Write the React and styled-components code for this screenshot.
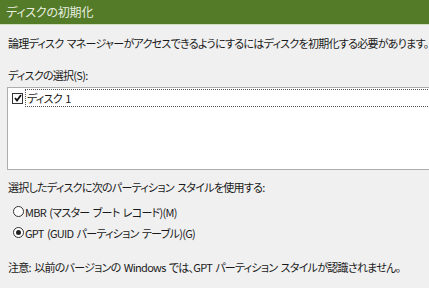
import React from 'react';
import styled, { createGlobalStyle } from 'styled-components';

const GlobalStyle = createGlobalStyle`
	html, body {
		margin: 0;
		padding: 0;
		background: #f0f0f0;
		overflow: hidden;
	}
	body {
		font-family: 'Noto Sans CJK JP', 'Noto Sans', sans-serif;
		font-feature-settings: 'palt';
		font-size: 11px;
		letter-spacing: -0.72px;
		word-spacing: 1.5px;
		color: #1a1a1a;
	}
`;

const Dialog = styled.div`
	width: 429px;
	height: 288px;
	overflow: hidden;
	background: #f0f0f0;
	display: flex;
	flex-direction: column;
`;

const TitleBar = styled.div`
	height: 24px;
	line-height: 24px;
	padding-left: 6px;
	background: #547b27;
	color: #e8eee0;
	font-size: 12px;
	letter-spacing: -0.2px;
	border-bottom: 1px solid #cfdcc0;
`;

const Body = styled.div`
	padding: 0 0 0 8px;
	display: flex;
	flex-direction: column;
`;

const Text = styled.div`
	line-height: 18px;
	white-space: nowrap;
	margin-top: ${(p) => p.top || 0}px;
`;

const ListBox = styled.div`
	margin: 3px 0 0 -1px;
	width: 460px;
	height: 80px;
	background: #fff;
	border: 1px solid #adadad;
	padding: 1px 0 0 4px;
`;

const ListItem = styled.div`
	display: flex;
	align-items: center;
	height: 18px;
	gap: 2px;
`;

const Check = styled.span`
	width: 9px;
	height: 9px;
	border: 1px solid #333;
	background: #fff;
	display: flex;
	align-items: center;
	justify-content: center;
`;

const ItemLabel = styled.span`
	flex: 1;
	height: 16px;
	line-height: 16px;
	padding-left: 1px;
	border: 1px dotted #555;
`;

const RadioRow = styled.label`
	display: flex;
	align-items: center;
	gap: 1px;
	height: 21px;
	padding-left: 5px;
	white-space: nowrap;
`;

const Radio = styled.span`
	width: 9px;
	height: 9px;
	border-radius: 50%;
	border: 1px solid #333;
	background: #fff;
	display: flex;
	align-items: center;
	justify-content: center;
	&::after {
		content: '';
		width: 5px;
		height: 5px;
		border-radius: 50%;
		background: ${(p) => (p.checked ? '#222' : 'transparent')};
	}
`;

export default function App() {
	return (
		<Dialog>
			<GlobalStyle />
			<TitleBar>ディスクの初期化</TitleBar>
			<Body>
				<Text top={9}>
					論理ディスク マネージャーがアクセスできるようにするにはディスクを初期化する必要があります。
				</Text>
				<Text top={14}>ディスクの選択(S):</Text>
				<ListBox>
					<ListItem>
						<Check>
							<svg width='8' height='8' viewBox='0 0 8 8'>
								<polyline points='1 4 3 6.5 7 1' fill='none' stroke='#111' strokeWidth='1.8' />
							</svg>
						</Check>
						<ItemLabel>ディスク 1</ItemLabel>
					</ListItem>
				</ListBox>
				<Text top={8}>選択したディスクに次のパーティション スタイルを使用する:</Text>
				<RadioRow style={{ marginTop: 5 }}>
					<Radio />
					MBR (マスター ブート レコード)(M)
				</RadioRow>
				<RadioRow>
					<Radio checked />
					GPT (GUID パーティション テーブル)(G)
				</RadioRow>
				<Text top={15}>
					注意: 以前のバージョンの Windows では、GPT パーティション スタイルが認識されません。
				</Text>
			</Body>
		</Dialog>
	);
}
